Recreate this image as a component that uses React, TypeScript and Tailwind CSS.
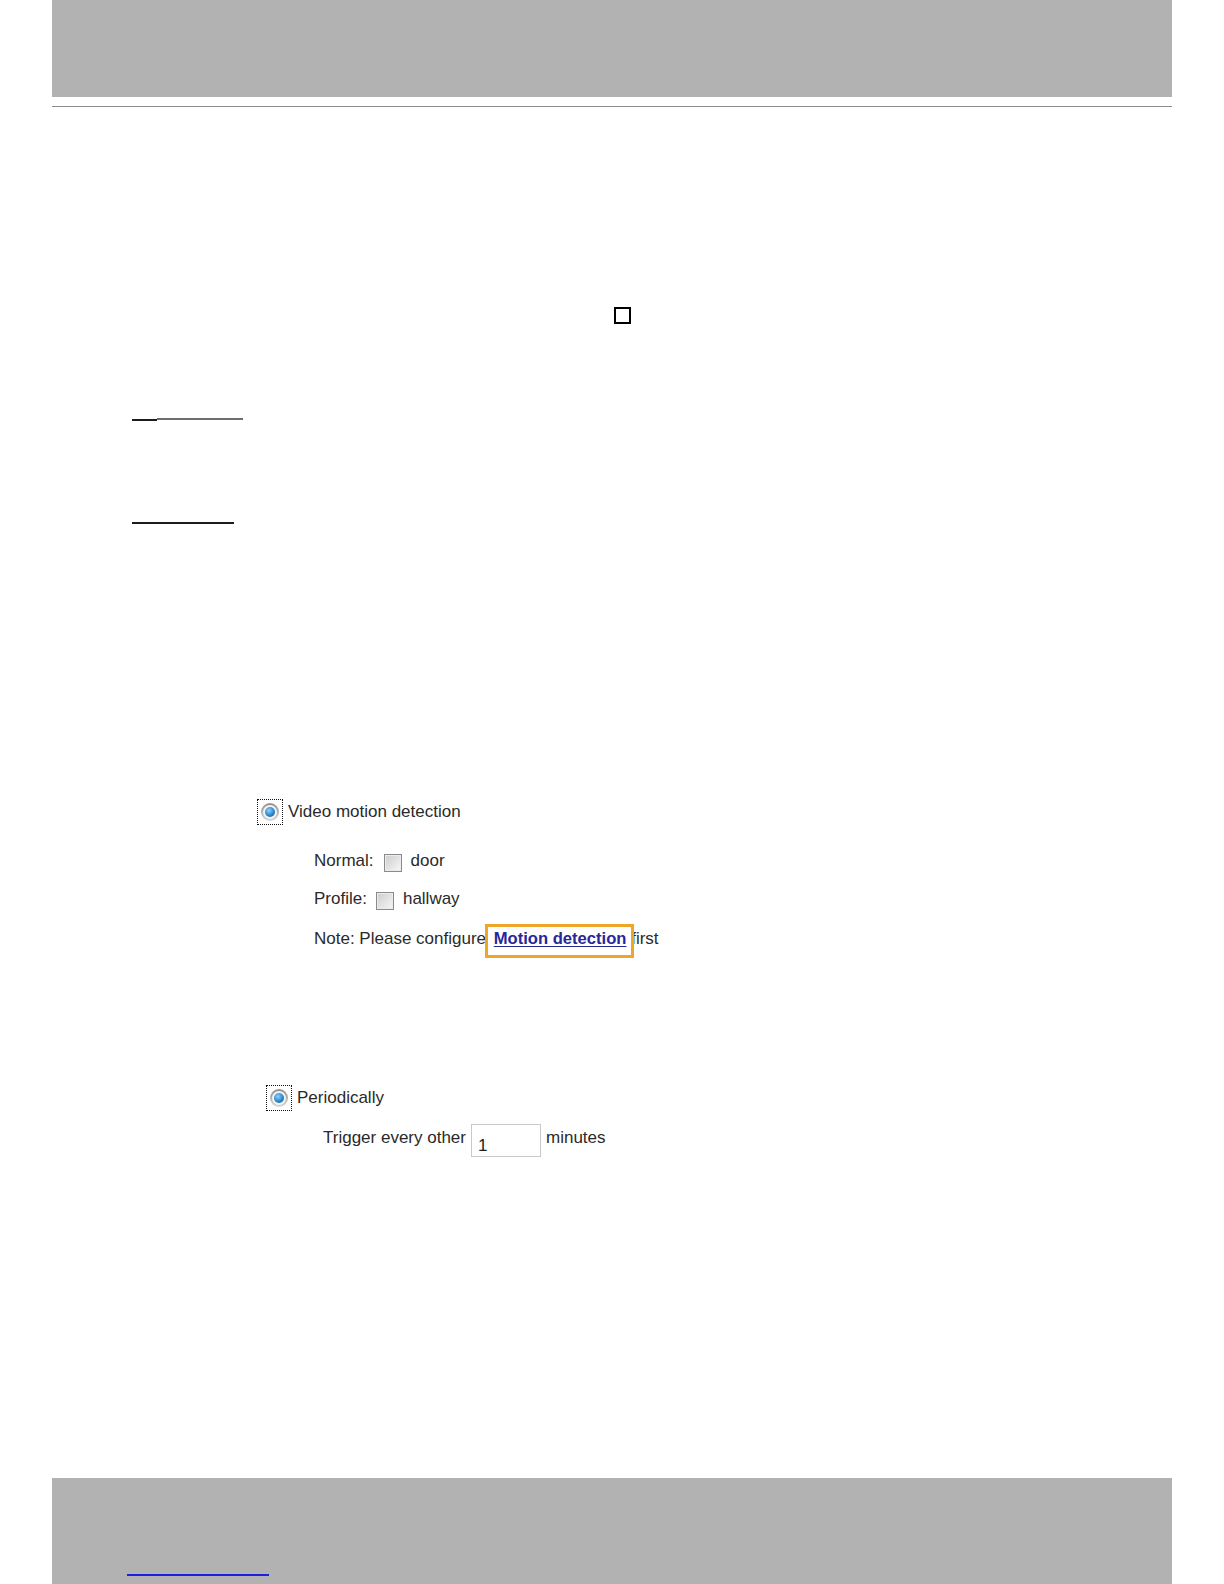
import React from "react";

// focused radio: dotted focus ring round a blue-dotted radio
function FocusRadio() {
  return (
    <div className="flex h-[26px] w-[26px] shrink-0 items-center justify-center border-[1.5px] border-dotted border-[#111]">
      <div className="flex h-[18px] w-[18px] items-center justify-center rounded-full bg-linear-to-b from-[#8f8f8f] to-[#d9d9d9] p-[2px]">
        <div className="flex h-full w-full items-center justify-center rounded-full bg-[#f3f3f3]">
          <div className="h-[10px] w-[10px] rounded-full bg-[radial-gradient(circle_at_40%_35%,#8fd2ff,#2a86cc_55%,#0f4f8c)]" />
        </div>
      </div>
    </div>
  );
}

function Checkbox() {
  return (
    <span className="inline-block h-[18px] w-[18px] shrink-0 border border-[#8a8a8a] bg-linear-to-br from-[#cdcdcd] to-[#f7f7f7] shadow-[inset_0_0_0_1px_#ececec]" />
  );
}

export default function App() {
  return (
    <div
      className="flex min-h-[1584px] w-full flex-col bg-white text-[17px] leading-[20px] text-[#2a2a2a]"
      style={{ fontFamily: '"Liberation Sans", Arial, sans-serif' }}>
      {/* page header band */}
      <div className="mx-[52px] h-[97px] bg-[#b2b2b2]" />
      <div className="mx-[52px] mt-[9px] h-px bg-[#8c8c8c]" />

      {/* empty checkbox glyph */}
      <div className="ml-[614px] mt-[200px] h-[17px] w-[17px] border-2 border-black" />

      {/* underline rules */}
      <div className="ml-[132px] mt-[94px] flex items-start">
        <div className="mt-px h-[2px] w-[25px] bg-[#1c1c1c]" />
        <div className="h-[2px] w-[86px] bg-[#6e6e6e]" />
      </div>
      <div className="ml-[132px] mt-[101px] h-[2px] w-[102px] bg-[#1c1c1c]" />

      {/* video motion detection */}
      <div className="ml-[257px] mt-[275px] flex h-[26px] items-center">
        <FocusRadio />
        <span className="ml-[5px]">Video motion detection</span>
      </div>

      <div className="ml-[314px] mt-[25px] flex h-[22px] items-center">
        <span>Normal:</span>
        <span className="ml-[10px] mt-[3px] flex">
          <Checkbox />
        </span>
        <span className="ml-[9px]">door</span>
      </div>

      <div className="ml-[314px] mt-[16px] flex h-[22px] items-center">
        <span>Profile:</span>
        <span className="ml-[9px] mt-[3px] flex">
          <Checkbox />
        </span>
        <span className="ml-[9px]">hallway</span>
      </div>

      <div className="ml-[314px] mt-[18px] flex h-[22px] items-center whitespace-pre">
        <span>Note: Please configure </span>
        <span className="relative ml-[3px]">
          <a href="#" className="text-[16.6px] font-bold text-[#27279a] underline underline-offset-2">
            Motion detection
          </a>
          <span className="absolute -left-[9px] -right-[8px] -top-[5px] -bottom-[9px] border-[3px] border-[#efa628]" />
        </span>
        <span> first</span>
      </div>

      {/* periodically */}
      <div className="ml-[266px] mt-[134px] flex h-[27px] items-center">
        <FocusRadio />
        <span className="ml-[5px]">Periodically</span>
      </div>

      <div className="ml-[323px] mt-[13px] flex h-[33px] items-start">
        <span className="mt-[4px]">Trigger every other</span>
        <input
          readOnly
          value="1"
          className="ml-[5px] h-[33px] w-[70px] border border-[#c9c9c9] bg-white px-[6px] pb-0 pt-[10px] text-[17px] leading-[20px] text-[#222] outline-none"
        />
        <span className="ml-[5px] mt-[4px]">minutes</span>
      </div>

      {/* page footer band */}
      <div className="mx-[52px] mt-[321px] h-[106px] bg-[#b2b2b2] pl-[75px] pt-[96px]">
        <div className="h-[2px] w-[142px] bg-[#1f1fe0]" />
      </div>
    </div>
  );
}
